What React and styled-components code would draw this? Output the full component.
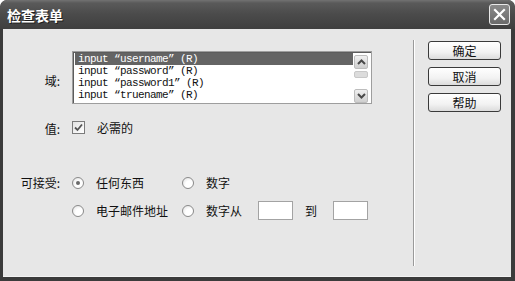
import styled, { createGlobalStyle } from "styled-components"

const Global = createGlobalStyle`
    html, body {
        margin: 0;
        padding: 0;
        background: #ffffff;
    }
    body {
        font-family: "Noto Sans CJK SC", "Noto Sans", sans-serif;
    }
`

const Window = styled.div`
    width: 515px;
    height: 281px;
    box-sizing: border-box;
    background: #3b3b3b;
    border-radius: 7px 7px 0 0;
    display: flex;
    flex-direction: column;
    overflow: hidden;
`

const TitleBar = styled.div`
    height: 29px;
    flex: none;
    display: flex;
    align-items: center;
    justify-content: space-between;
    padding: 0 5px 0 7px;
    background: linear-gradient(#727272 0px, #5a5a5a 3px, #4b4b4b 14px, #3f3f3f 29px);
    border-radius: 7px 7px 0 0;
`

const Title = styled.div`
    color: #ffffff;
    font-size: 14px;
    font-weight: bold;
    line-height: 14px;
    text-shadow: 1px 1px 0 #1e1e1e;
    padding-top: 1px;
`

const CloseButton = styled.div`
    width: 19px;
    height: 19px;
    border: 1px solid #e8e8e8;
    border-radius: 3px;
    background: linear-gradient(#8a8a8a, #6a6a6a);
    display: flex;
    align-items: center;
    justify-content: center;
`

const Body = styled.div`
    flex: 1;
    margin: 0 4px 4px 3px;
    background: #e7e7e7;
    display: flex;
    border-bottom: 1px solid #f3f3f3;
`

const Form = styled.div`
    width: 410px;
    flex: none;
    box-sizing: border-box;
    padding-top: 22px;
    display: grid;
    grid-template-columns: 57px 1fr;
    column-gap: 12px;
    align-content: start;
    font-size: 12px;
    color: #111;
`

const Label = styled.div`
    text-align: right;
    align-self: ${(p) => p.align || "center"};
    line-height: 14px;
    margin-top: ${(p) => p.offset || 0}px;
`

const ListBox = styled.div`
    width: 300px;
    height: 53px;
    box-sizing: border-box;
    background: #ffffff;
    border: 1px solid #9e9e9e;
    box-shadow: inset 1px 1px 0 #5c5c5c;
    padding: 1px 0 0 2px;
    display: flex;
    font-family: "Liberation Mono", "DejaVu Sans Mono", monospace;
    font-size: 11px;
    letter-spacing: -0.6px;
`

const Rows = styled.div`
    flex: 1;
    display: flex;
    flex-direction: column;
`

const Row = styled.div`
    height: 12px;
    line-height: 12px;
    padding-left: 3px;
    white-space: pre;
    background: ${(p) => (p.selected ? "#646464" : "transparent")};
    color: ${(p) => (p.selected ? "#ffffff" : "#111111")};
`

const ScrollBar = styled.div`
    width: 16px;
    flex: none;
    display: flex;
    flex-direction: column;
    align-items: center;
    padding: 2px 2px 0 0;
`

const ScrollButton = styled.div`
    width: 14px;
    height: 14px;
    box-sizing: border-box;
    border: 1px solid #bdbdbd;
    border-radius: 2px;
    background: linear-gradient(#f0f0f0, #cfcfcf);
    display: flex;
    align-items: center;
    justify-content: center;
`

const Thumb = styled.div`
    width: 14px;
    height: 7px;
    box-sizing: border-box;
    margin: 2px 0 auto;
    border: 1px solid #c8c8c8;
    border-radius: 2px;
    background: #dcdcdc;
`

const CheckRow = styled.div`
    margin-top: 15px;
    display: flex;
    align-items: center;
    gap: 12px;
`

const CheckBox = styled.div`
    width: 13px;
    height: 13px;
    box-sizing: border-box;
    border: 1px solid #7b7b7b;
    background: linear-gradient(135deg, #e2e2e2, #ffffff);
    display: flex;
    align-items: center;
    justify-content: center;
`

const Options = styled.div`
    margin-top: 37px;
    display: grid;
    grid-template-columns: 110px auto;
    grid-auto-rows: 19px;
    row-gap: 9px;
`

const Option = styled.div`
    display: flex;
    align-items: center;
    gap: 12px;
    line-height: 14px;
`

const Radio = styled.div`
    width: 12px;
    height: 12px;
    box-sizing: border-box;
    border-radius: 50%;
    border: 1px solid #8a8a8a;
    background: radial-gradient(circle at 65% 65%, #ffffff 40%, #dcdcdc);
    display: flex;
    align-items: center;
    justify-content: center;
    flex: none;

    &::after {
        content: "";
        width: 4px;
        height: 4px;
        border-radius: 50%;
        background: #6a6a6a;
        display: ${(p) => (p.checked ? "block" : "none")};
    }
`

const NumberInput = styled.div`
    width: 35px;
    height: 19px;
    box-sizing: border-box;
    background: #ffffff;
    border: 1px solid #a3a3a3;
    margin-left: 4px;
`

const Separator = styled.div`
    width: 1px;
    flex: none;
    margin: 11px 0 10px;
    background: #9a9a9a;
    border-right: 1px solid #ffffff;
`

const Buttons = styled.div`
    margin: 12px 0 0 13px;
    display: flex;
    flex-direction: column;
    gap: 7px;
`

const Button = styled.div`
    width: 73px;
    height: 19px;
    box-sizing: border-box;
    border: 1px solid #3a3a3a;
    border-radius: 3px;
    background: linear-gradient(#ffffff, #f2f2f2 60%, #dcdcdc);
    font-size: 12px;
    line-height: 17px;
    text-align: center;
    color: #111;
`

const Up = () => (
    <svg width="9" height="6" viewBox="0 0 9 6">
        <path d="M1 5 L4.5 1.5 L8 5" fill="none" stroke="#4a4a4a" strokeWidth="2" />
    </svg>
)

const Down = () => (
    <svg width="9" height="6" viewBox="0 0 9 6">
        <path d="M1 1 L4.5 4.5 L8 1" fill="none" stroke="#4a4a4a" strokeWidth="2" />
    </svg>
)

const rows = [
    "input “username” (R)",
    "input “password” (R)",
    "input “password1” (R)",
    "input “truename” (R)",
]

const App = () => {
    return (
        <Window>
            <Global />
            <TitleBar>
                <Title>检查表单</Title>
                <CloseButton>
                    <svg width="13" height="13" viewBox="0 0 13 13">
                        <path d="M2 2 L11 11 M11 2 L2 11" stroke="#ffffff" strokeWidth="2.2" strokeLinecap="square" />
                    </svg>
                </CloseButton>
            </TitleBar>
            <Body>
                <Form>
                    <Label offset={6}>域:</Label>
                    <ListBox>
                        <Rows>
                            {rows.map((r, i) => (
                                <Row key={r} selected={i === 0}>{r}</Row>
                            ))}
                        </Rows>
                        <ScrollBar>
                            <ScrollButton><Up /></ScrollButton>
                            <Thumb />
                            <ScrollButton><Down /></ScrollButton>
                        </ScrollBar>
                    </ListBox>

                    <Label offset={17}>值:</Label>
                    <CheckRow>
                        <CheckBox>
                            <svg width="9" height="9" viewBox="0 0 9 9">
                                <path d="M1 4.5 L3.5 7 L8 1.5" fill="none" stroke="#555" strokeWidth="1.8" />
                            </svg>
                        </CheckBox>
                        <span>必需的</span>
                    </CheckRow>

                    <Label align="start" offset={40}>可接受:</Label>
                    <Options>
                        <Option><Radio checked />任何东西</Option>
                        <Option><Radio />数字</Option>
                        <Option><Radio />电子邮件地址</Option>
                        <Option>
                            <Radio />数字从
                            <NumberInput />
                            <span>到</span>
                            <NumberInput />
                        </Option>
                    </Options>
                </Form>
                <Separator />
                <Buttons>
                    <Button>确定</Button>
                    <Button>取消</Button>
                    <Button>帮助</Button>
                </Buttons>
            </Body>
        </Window>
    )
}

export default App
